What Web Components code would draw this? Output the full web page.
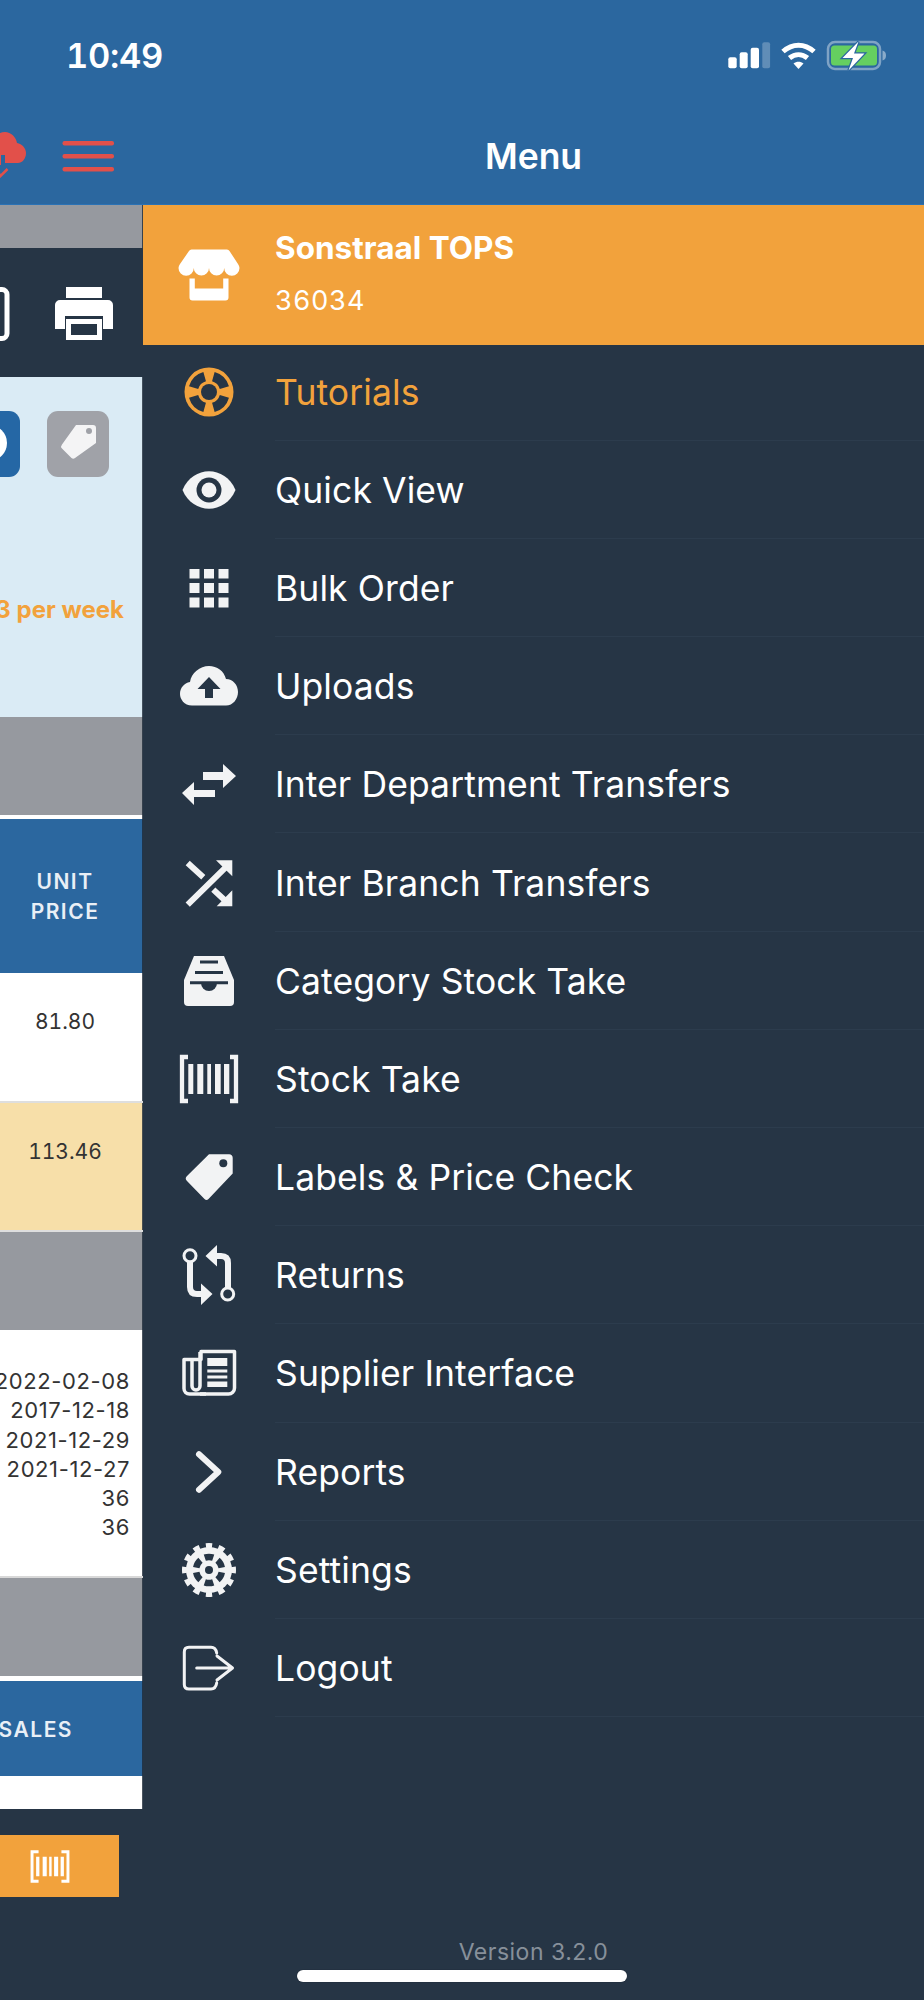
<!DOCTYPE html>
<html>
<head>
<meta charset="utf-8">
<title>Menu</title>
<style>
  html, body { margin: 0; padding: 0; background: #263545; }
  body { font-family: Inter, "Liberation Sans", sans-serif; }
</style>
</head>
<body>
<template id="app-screen-tpl">
  <style>
    :host { display: flex; flex-direction: column; position: relative; width: 924px; height: 2000px; overflow: hidden; background: #263545; }
    .body { display: flex; flex: 1; min-height: 0; }
    .home { position: absolute; left: 297px; top: 1970px; width: 330px; height: 12px; border-radius: 6px; background: #fff; box-shadow: 0 0 1px #0d1622; }
  </style>
  <slot name="top"></slot>
  <div class="body"><slot></slot></div>
  <div class="home"></div>
</template>

<template id="top-bar-tpl">
  <style>
    :host { display: flex; flex-direction: column; height: 204px; background: #2b679f; border-bottom: 1px solid #2a72b5; color: #fff; flex: none; }
    .status { display: flex; align-items: center; height: 110px; padding-left: 66px; }
    .time { font-size: 34.500px; font-weight: 600; font-variant-numeric: tabular-nums; letter-spacing: -0.3px; }
    .status svg { display: block; margin-left: auto; }
    .nav { display: flex; align-items: center; flex: 1; padding-bottom: 2px; }
    .left { width: 143px; height: 64px; flex: none; }
    .title { flex: 1; text-align: center; font-size: 35.500px; font-weight: 600; }
  </style>
  <div class="status">
    <span class="time">10:49</span>
    <svg width="196" height="40" viewBox="728 35 196 40">
      <g fill="#fff">
        <rect x="728.3" y="57.3" width="8.4" height="11" rx="2"/>
        <rect x="739.7" y="52.3" width="8" height="16" rx="2"/>
        <rect x="750.7" y="47.7" width="8.3" height="20.6" rx="2"/>
        <rect x="762.3" y="42.3" width="7.8" height="26" rx="2" opacity=".25"/>
      </g>
      <g fill="none" stroke="#fff" stroke-width="5">
        <path d="M783 51.5c9.500-8.500 21.500-8.500 31 0"/>
        <path d="M789.500 58c5.500-4.500 12.500-4.500 18 0"/>
      </g>
      <path fill="#fff" d="M793.500 63.500c3-2.500 7-2.500 10 0l-5 5.500z"/>
      <rect x="828" y="42" width="52" height="27" rx="7" fill="none" stroke="#fff" stroke-opacity=".4" stroke-width="2.500"/>
      <rect x="831" y="45.500" width="46" height="20" rx="3.500" fill="#65cf60"/>
      <path fill="#fff" opacity=".45" d="M882.500 50.500c2.500.5 3.500 2.500 3.500 5s-1 4.500-3.500 5z"/>
      <path fill="#fff" stroke="#2b679f" stroke-width="2.500" paint-order="stroke" d="M858.500 41.500 842.500 58h10.500l-4.500 12.500L864.500 53.500h-10.500z"/>
    </svg>
  </div>
  <div class="nav">
    <div class="left">
      <svg width="143" height="64" viewBox="0 125 143 64">
        <path fill="#e2504a" d="M-8 166c-9 0-12-7-12-12 0-8 7-14 14-15 3-4 7-6 11-6 6 0 11 5 12 11 5 1 9 5 9 10 0 6-4 10-8 10H5v-8H1v10z"/>
        <path fill="none" stroke="#e2504a" stroke-width="2.500" d="M-4 170l4.500 7 7-7"/>
        <g fill="#e2504a">
          <rect x="62.500" y="142" width="51.500" height="4.600" rx="2"/>
          <rect x="62.500" y="155" width="51.500" height="4.600" rx="2"/>
          <rect x="62.500" y="168" width="51.500" height="4.600" rx="2"/>
        </g>
      </svg>
    </div>
    <div class="title"><slot></slot></div>
  </div>
</template>

<template id="left-pane-tpl">
  <style>
    :host { display: flex; flex-direction: column; width: 143px; flex: none; height: 100%; overflow: hidden; background: #263545; color: #333; }
    ::slotted(:not(pane-toolbar):not(pane-scan)) { box-shadow: inset -1px 0 0 rgba(30, 42, 56, .8); }
  </style>
  <slot></slot>
</template>

<template id="pane-band-tpl">
  <style>
    :host { display: block; flex: none; height: var(--h, 98px); background: var(--bg, #96999f); box-sizing: border-box; }
  </style>
  <slot></slot>
</template>

<template id="pane-toolbar-tpl">
  <style>
    :host { display: flex; flex: none; justify-content: flex-end; align-items: center; gap: 42px; height: 129px; padding-right: 27px; background: #263545; }
    ::slotted(svg) { flex: none; display: block; }
  </style>
  <slot></slot>
</template>

<template id="pane-info-tpl">
  <style>
    :host { display: flex; flex-direction: column; flex: none; height: 340px; box-sizing: border-box; padding-top: 34px; background: #daebf5; overflow: hidden; }
    .buttons { display: flex; justify-content: flex-end; gap: 27px; padding-right: 34px; }
    .btn { flex: none; width: 62px; height: 66px; border-radius: 11px; overflow: hidden; }
    .btn.blue { background: #2567a5; }
    .btn.grey { background: #a0a2a8; }
    .btn svg { display: block; }
    .rate { display: flex; justify-content: flex-end; margin-top: 118px; padding-right: 19px; white-space: nowrap; font-size: 24px; line-height: 30px; font-weight: 700; color: #f2a23c; }
  </style>
  <div class="buttons">
    <div class="btn blue">
      <svg width="62" height="66" viewBox="0 0 62 66"><circle cx="31" cy="32" r="18" fill="#fff"/></svg>
    </div>
    <div class="btn grey">
      <svg width="62" height="66" viewBox="0 0 62 66">
        <path fill="#f4f4f5" d="M29 14H46a3 3 0 0 1 3 3V32L28 47a3 3 0 0 1-3.500 0L15 37.500a3 3 0 0 1 0-4z"/>
        <circle cx="42" cy="20" r="3" fill="#a0a2a8"/>
      </svg>
    </div>
  </div>
  <div class="rate"><slot></slot></div>
</template>

<template id="pane-head-tpl">
  <style>
    :host { display: flex; flex: none; flex-direction: column; justify-content: center; box-sizing: border-box; height: var(--h, 154px); padding: 2px 13px 0 0; background: #2b679f; color: #e9eff6; font-size: 21px; line-height: 30px; font-weight: 600; letter-spacing: 1.500px; white-space: nowrap; text-align: center; }
  </style>
  <slot></slot>
</template>

<template id="pane-value-tpl">
  <style>
    :host { display: block; flex: none; box-sizing: border-box; height: 129.500px; padding: 34px 13px 0 0; font-size: 21px; line-height: 30px; font-variant-numeric: tabular-nums; text-align: center; color: #333; background: var(--bg, #fff); border-bottom: 2px solid #dedede; }
  </style>
  <slot></slot>
</template>

<template id="pane-dates-tpl">
  <style>
    :host { display: flex; flex-direction: column; align-items: flex-end; flex: none; box-sizing: border-box; height: 248px; overflow: hidden; padding: 37px 13px 0 0; background: #fff; color: #333; font-size: 22px; line-height: 29.300px; letter-spacing: .6px; white-space: nowrap; border-bottom: 2px solid #d8d8d8; }
    ::slotted(span) { display: block; }
  </style>
  <slot></slot>
</template>

<template id="pane-scan-tpl">
  <style>
    :host { display: block; flex: 1; padding-top: 26px; background: #263545; }
    .btn { display: flex; align-items: center; justify-content: center; box-sizing: border-box; height: 62px; width: 119px; background: #f2a23c; padding-right: 20px; }
    svg { display: block; }
  </style>
  <div class="btn">
    <svg width="40" height="33" viewBox="-24.500 -20 49 40">
      <path fill="none" stroke="#fff" stroke-width="3.600" d="M-14 -18H-22V18H-14M14 -18H22V18H14"/>
      <path fill="#fff" d="M-17-12h4v24h-4zM-9-12h5v24h-5zM-1-12h3v24h-3zM5-12h5v24H5zM13-12h4v24h-4z"/>
    </svg>
  </div>
</template>

<template id="menu-panel-tpl">
  <style>
    :host { display: flex; flex-direction: column; flex: 1; min-width: 0; background: #263545; color: #fff; }
    .list { display: flex; flex-direction: column; margin-top: -2.500px; flex: 1; }
    .version { height: 48px; margin-bottom: 24px; text-align: center; font-size: 23px; line-height: 48px; letter-spacing: .5px; color: #87909a; }
  </style>
  <slot name="head"></slot>
  <div class="list"><slot></slot></div>
  <div class="version"><slot name="version"></slot></div>
</template>

<template id="store-head-tpl">
  <style>
    :host { display: flex; flex: none; align-items: center; height: 140px; background: #f2a23c; color: #fff; position: relative; z-index: 1; }
    .icon { width: 64px; height: 64px; margin: 0 34px 0 34px; flex: none; }
    .text { display: flex; flex-direction: column; gap: 14px; }
    .name { font-size: 31.500px; font-weight: 700; line-height: 38px; margin-top: -2px; }
    .num { font-size: 27px; line-height: 38px; letter-spacing: .5px; font-variant-numeric: tabular-nums; padding-top: 1px; }
    ::slotted(svg) { display: block; }
  </style>
  <div class="icon"><slot name="icon"></slot></div>
  <div class="text">
    <div class="name"><slot name="name"></slot></div>
    <div class="num"><slot name="num"></slot></div>
  </div>
</template>

<template id="menu-item-tpl">
  <style>
    :host { display: flex; flex: none; align-items: center; height: 98.200px; position: relative; box-sizing: border-box; color: #fff; font-size: 35.500px; letter-spacing: .1px; }
    :host([active]) { color: #f2a23c; }
    :host::after { content: ""; position: absolute; left: 132px; right: 0; bottom: 0; height: 1px; background: #2c3c4d; }
    .icon { width: 64px; height: 64px; margin: 0 34px 0 34px; flex: none; }
    .label { padding-top: 1px; }
    ::slotted(svg) { display: block; }
  </style>
  <div class="icon"><slot name="icon"></slot></div>
  <div class="label"><slot></slot></div>
</template>

<app-screen>
  <top-bar slot="top">Menu</top-bar>
  <left-pane>
    <pane-band style="--h:43px"></pane-band>
    <pane-toolbar>
      <svg width="30" height="64" viewBox="0 0 30 64"><rect x="-20" y="8.500" width="47" height="49" rx="5" fill="none" stroke="#fff" stroke-width="5"/></svg>
      <svg width="64" height="64" viewBox="-32 -32 64 64" style="position:relative;top:1px">
        <path fill="#fff" d="M-18-27h36v11h-36zM-24-14h48a5 5 0 0 1 5 5V15H19V2H-19V15H-29V-9a5 5 0 0 1 5-5z"/>
        <path fill="#fff" d="M-18 5H18V26H-18zM-13 10v11H13V10z" fill-rule="evenodd"/>
      </svg>
    </pane-toolbar>
    <pane-info>3 per week</pane-info>
    <pane-band></pane-band>
    <pane-band style="--h:4px;--bg:#fff"></pane-band>
    <pane-head style="--h:154px"><span>UNIT</span><span>PRICE</span></pane-head>
    <pane-value>81.80</pane-value>
    <pane-value style="--bg:#f7dfa9">113.46</pane-value>
    <pane-band></pane-band>
    <pane-dates>
      <span>2022-02-08</span><span>2017-12-18</span><span>2021-12-29</span><span>2021-12-27</span><span>36</span><span>36</span>
    </pane-dates>
    <pane-band></pane-band>
    <pane-band style="--h:5px;--bg:#fff"></pane-band>
    <pane-head style="--h:95px;text-align:right;align-items:flex-end;padding-right:70px"><span>SALES</span></pane-head>
    <pane-band style="--h:33px;--bg:#fff"></pane-band>
    <pane-scan></pane-scan>
  </left-pane>

  <menu-panel>
    <store-head slot="head">
      <svg slot="icon" width="64" height="64" viewBox="-32 -32 64 64" fill="#fff">
        <path d="M-17-25.500H18a3 3 0 0 1 2.500 1.500L29-11a7 7 0 0 1 1.500 4A7.600 7.600 0 0 1 15.200-7 7.600 7.600 0 0 1 0-7 7.600 7.600 0 0 1-15.200-7 7.600 7.600 0 0 1-30.500-7a7 7 0 0 1 1.500-4L-20-24a3 3 0 0 1 3-1.500z"/>
        <path d="M-19.500 3.500h5.300v10h28.400v-10h5.300v19a3 3 0 0 1-3 3h-33a3 3 0 0 1-3-3z"/>
      </svg>
      <span slot="name">Sonstraal TOPS</span>
      <span slot="num">36034</span>
    </store-head>

    <menu-item active>
      <svg slot="icon" width="64" height="64" viewBox="-32 -32 64 64">
        <circle r="24.500" fill="#f2a23c"/>
        <circle r="16" fill="none" stroke="#263545" stroke-width="9.500" pathLength="360" stroke-dasharray="58 32" stroke-dashoffset="-16"/>
        <circle r="8" fill="#263545"/>
      </svg>
      Tutorials
    </menu-item>

    <menu-item>
      <svg slot="icon" width="64" height="64" viewBox="-32 -32 64 64">
        <path fill="#f2f3f4" d="M-26.500 0C-16-25 16-25 26.500 0 16 25-16 25-26.500 0z"/>
        <circle r="12.500" fill="#263545"/>
        <circle r="7.500" fill="#f2f3f4"/>
      </svg>
      Quick View
    </menu-item>

    <menu-item>
      <svg slot="icon" width="64" height="64" viewBox="-32 -32 64 64" fill="#f2f3f4">
        <rect x="-19.500" y="-19" width="10" height="9.500"/><rect x="-5" y="-19" width="10" height="9.500"/><rect x="9.500" y="-19" width="10" height="9.500"/>
        <rect x="-19.500" y="-5" width="10" height="10"/><rect x="-5" y="-5" width="10" height="10"/><rect x="9.500" y="-5" width="10" height="10"/>
        <rect x="-19.500" y="9.500" width="10" height="10"/><rect x="-5" y="9.500" width="10" height="10"/><rect x="9.500" y="9.500" width="10" height="10"/>
      </svg>
      Bulk Order
    </menu-item>

    <menu-item>
      <svg slot="icon" width="64" height="64" viewBox="-32 -32 64 64">
        <path fill="#f2f3f4" d="M-17 19.500C-25 19.500-29 13-29 8-29 2-25-3-19-4-18-13-9-20 0-20 8-20 15-15 17-7 24-7 29-1 29 6 29 13 24 19.500 17 19.500z"/>
        <path fill="#263545" d="M0-9 11.500 3H4V12H-4V3H-11.500z"/>
      </svg>
      Uploads
    </menu-item>

    <menu-item>
      <svg slot="icon" width="64" height="64" viewBox="-32 -32 64 64" fill="#f2f3f4">
        <path d="M-6-12H14V-20L27-8 14 4V-4H-6z"/>
        <path d="M6 6H-15V-2L-27 9-15 21V13H6z"/>
      </svg>
      Inter Department Transfers
    </menu-item>

    <menu-item>
      <svg slot="icon" width="64" height="64" viewBox="-32 -32 64 64">
        <g fill="none" stroke="#f2f3f4" stroke-width="6">
          <path d="M-21.300 21.600 17.700-16.700M-21.300-20-5.700-5.700M4.300 6.600 17.700 19"/>
        </g>
        <path fill="#f2f3f4" d="M23.300-22.700H7L23.300-6.700zM23.300 23.300H7.700L23.300 7.300z"/>
      </svg>
      Inter Branch Transfers
    </menu-item>

    <menu-item>
      <svg slot="icon" width="64" height="64" viewBox="-32 -32 64 64">
        <path fill="#f2f3f4" d="M-15-25H15L25-1V21a4 4 0 0 1-4 4H-21a4 4 0 0 1-4-4V-1z"/>
        <path fill="none" stroke="#263545" stroke-width="3" d="M-9-19H9M-14-8.500H14M-19 1.700H19"/>
        <path fill="#263545" d="M-8 2H8A8 8 0 0 1-8 2z"/>
      </svg>
      Category Stock Take
    </menu-item>

    <menu-item>
      <svg slot="icon" width="64" height="64" viewBox="-32 -32 64 64">
        <path fill="none" stroke="#f2f3f4" stroke-width="4.300" d="M-21-22H-27V22H-21M21-22H27V22H21"/>
        <path fill="#f2f3f4" d="M-20.700-15H-15.700V15H-20.700zM-11.700-15H-5.700V15H-11.700zM-1.700-15H2V15H-1.700zM6-15H11.700V15H6zM15-15H20.300V15H15z"/>
      </svg>
      Stock Take
    </menu-item>

    <menu-item>
      <svg slot="icon" width="64" height="64" viewBox="-32 -32 64 64">
        <path fill="#f2f3f4" d="M0-22.700H20a3.500 3.500 0 0 1 3.700 3.700V-3.500L-.5 22a3 3 0 0 1-4 0L-22 4a3.500 3.500 0 0 1 0-5z"/>
        <circle cx="14.300" cy="-13.700" r="4" fill="#263545"/>
      </svg>
      Labels &amp; Price Check
    </menu-item>

    <menu-item>
      <svg slot="icon" width="64" height="64" viewBox="-32 -32 64 64">
        <g fill="none" stroke="#f2f3f4">
          <path stroke-width="6" d="M-19-13V12Q-19 19-12 19H-5M19 13V-12Q19-19 12-19H5"/>
          <circle cx="-19" cy="-19.300" r="6" stroke-width="3"/>
          <circle cx="18.700" cy="19" r="6" stroke-width="3"/>
        </g>
        <path fill="#f2f3f4" d="M3.500 19-8 8.500V30zM-3.500-19 8-30V-8.500z"/>
      </svg>
      Returns
    </menu-item>

    <menu-item>
      <svg slot="icon" width="64" height="64" viewBox="-32 -32 64 64">
        <path fill="none" stroke="#f2f3f4" stroke-width="3.500" stroke-linejoin="round" d="M-8-21.500H25.500V15a6 6 0 0 1-6 6H-19.500a5.500 5.500 0 0 1-5.500-5.500V-13.500H-8z"/>
        <path fill="none" stroke="#f2f3f4" stroke-width="3.500" d="M-17-13V13a4 4 0 0 0 8 0V-21M-9 21h6"/>
        <path fill="#f2f3f4" d="M-1.700-15H18.300V-7H-1.700zM-1.700-3.500H18.300V-.5H-1.700zM-1.700 2.500H18.300V5.500H-1.700zM-1.700 8.500H18.300V14H-1.700z"/>
      </svg>
      Supplier Interface
    </menu-item>

    <menu-item>
      <svg slot="icon" width="64" height="64" viewBox="-32 -32 64 64">
        <path fill="none" stroke="#f2f3f4" stroke-width="6" stroke-linecap="round" stroke-linejoin="round" d="M-10-17.700 9.300 0-10 17.700"/>
      </svg>
      Reports
    </menu-item>

    <menu-item>
      <svg slot="icon" width="64" height="64" viewBox="-32 -32 64 64">
        <circle r="24.500" fill="none" stroke="#f2f3f4" stroke-width="5" pathLength="360" stroke-dasharray="15 15" stroke-dashoffset="7.500"/>
        <circle r="23" fill="#f2f3f4"/>
        <circle r="13" fill="none" stroke="#263545" stroke-width="6.500" pathLength="360" stroke-dasharray="38 22" stroke-dashoffset="-11"/>
        <circle r="4" fill="#263545"/>
      </svg>
      Settings
    </menu-item>

    <menu-item>
      <svg slot="icon" width="64" height="64" viewBox="-32 -32 64 64">
        <path fill="none" stroke="#f2f3f4" stroke-width="3" stroke-linecap="round" stroke-linejoin="round" d="M7.700-15Q6.700-20.700 2-20.700H-20Q-24.700-20.700-24.700-16V16.500Q-24.700 21-20 21H2Q6.700 21 7.700 15M-12.300 0H23.500M8-12 23.500 0 8 12"/>
      </svg>
      Logout
    </menu-item>

    <span slot="version">Version 3.2.0</span>
  </menu-panel>
</app-screen>

<script>
  // every element just clones its own template into an open shadow root
  const names = ["app-screen", "top-bar", "left-pane", "pane-band", "pane-toolbar", "pane-info",
    "pane-head", "pane-value", "pane-dates", "pane-scan", "menu-panel", "store-head", "menu-item"];

  names.forEach((name) => {
    customElements.define(name, class extends HTMLElement {
      constructor() {
        super();
        const tpl = document.getElementById(name + "-tpl");
        this.attachShadow({ mode: "open" }).appendChild(tpl.content.cloneNode(true));
      }
    });
  });
</script>
</body>
</html>
